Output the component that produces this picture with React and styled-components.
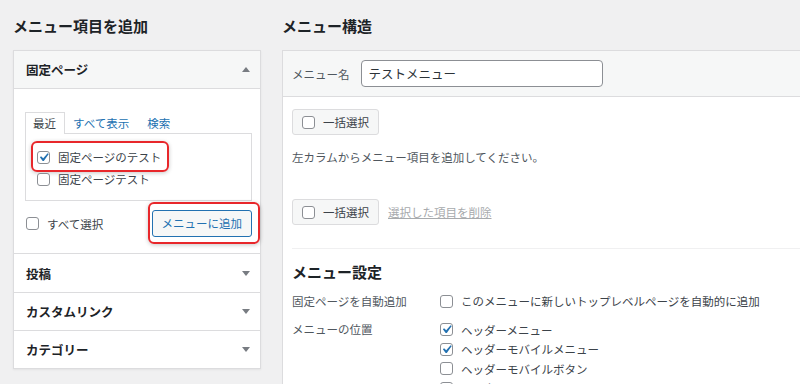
import React from "react";
import styled, { createGlobalStyle } from "styled-components";

const GlobalStyle = createGlobalStyle`
  html, body {
    margin: 0;
    padding: 0;
  }
  body {
    width: 800px;
    height: 384px;
    overflow: hidden;
    background: #f0f0f1;
    font-family: "Noto Sans CJK JP", "Noto Sans", sans-serif;
    font-size: 11.5px;
    color: #3c434a;
  }
`;

const Page = styled.div`
  display: flex;
  gap: 21px;
  padding: 16px 0 0 13px;
  width: 900px;
`;

const Column = styled.div`
  flex: none;
  width: ${(p) => p.$width}px;
`;

const Heading = styled.h2`
  margin: 0 0 14px;
  font-size: 15px;
  line-height: 20px;
  font-weight: 700;
  color: #1d2327;
`;

const Panel = styled.div`
  background: #fff;
  border: 1px solid #dcdcde;
  box-shadow: 0 1px 2px rgba(0, 0, 0, 0.06);
`;

const Section = styled.div`
  & + & {
    border-top: 1px solid #dcdcde;
  }
`;

const SectionHeader = styled.div`
  display: flex;
  align-items: center;
  justify-content: space-between;
  height: ${(p) => p.$height || 37}px;
  padding: 0 10px 0 12px;
  background: ${(p) => (p.$open ? "#f6f7f7" : "#fff")};
  border-bottom: ${(p) => (p.$open ? "1px solid #dcdcde" : "0")};
  font-size: 12.5px;
  font-weight: 700;
  color: #1d2327;
`;

const Arrow = styled.span`
  width: 0;
  height: 0;
  border-left: 4px solid transparent;
  border-right: 4px solid transparent;
  ${(p) =>
    p.$up
      ? "border-bottom: 5px solid #787c82;"
      : "border-top: 5px solid #787c82;"}
`;

const SectionBody = styled.div`
  padding: 23px 8px 16px 11px;
`;

const Tabs = styled.div`
  display: flex;
  align-items: flex-end;
  margin-bottom: -1px;
  position: relative;
  z-index: 1;
`;

const Tab = styled.span`
  line-height: 21px;
  padding: ${(p) => (p.$active ? "0 8px 0 7px" : "0 9px 0 7px")};
  color: ${(p) => (p.$active ? "#3c434a" : "#2271b1")};
  background: ${(p) => (p.$active ? "#fff" : "transparent")};
  border: 1px solid ${(p) => (p.$active ? "#dcdcde" : "transparent")};
  border-bottom: 0;
`;

const TabPanel = styled.div`
  box-sizing: border-box;
  height: 68px;
  border: 1px solid #dcdcde;
  padding: 12px 0 0 11px;
`;

const Item = styled.label`
  position: relative;
  display: inline-flex;
  align-items: center;
  gap: 8px;
  height: 22px;
  color: #3c434a;
`;

const ItemList = styled.div`
  display: flex;
  flex-direction: column;
  align-items: flex-start;
`;

const Highlight = styled.span`
  position: relative;
  display: inline-flex;

  &::after {
    content: "";
    position: absolute;
    top: ${(p) => p.$t}px;
    bottom: ${(p) => p.$b}px;
    left: ${(p) => p.$l}px;
    right: ${(p) => p.$r}px;
    border: 2px solid #e8272b;
    border-radius: 6px;
    box-shadow: 0 1px 4px rgba(0, 0, 0, 0.22);
    pointer-events: none;
  }
`;

const FooterRow = styled.div`
  display: flex;
  align-items: center;
  justify-content: space-between;
  margin-top: 9px;
  padding-left: 1px;
`;

const AddButton = styled.button`
  box-sizing: border-box;
  height: 27px;
  padding: 0 9px;
  font-family: inherit;
  font-size: 11.5px;
  line-height: 25px;
  color: #2271b1;
  background: #f6f7f7;
  border: 1px solid #2271b1;
  border-radius: 3px;
`;

const Box = styled.div`
  background: #fff;
  border: 1px solid #dcdcde;
  height: 400px;
`;

const BoxHeader = styled.div`
  display: flex;
  align-items: center;
  gap: 11px;
  height: 45px;
  padding: 0 9px;
  background: #f6f7f7;
  border-bottom: 1px solid #dcdcde;
`;

const Label = styled.span`
  color: #50575e;
  line-height: 20px;
`;

const NameInput = styled.input`
  box-sizing: border-box;
  width: 242px;
  height: 27px;
  padding: 0 7px;
  font-family: inherit;
  font-size: 12.5px;
  color: #2c3338;
  border: 1px solid #8c8f94;
  border-radius: 4px;
  background: #fff;
`;

const BoxBody = styled.div`
  padding: 12px 9px 0;
`;

const BulkRow = styled.div`
  display: flex;
  align-items: center;
  gap: 9px;
  margin-top: ${(p) => p.$mt || 0}px;
`;

const BulkButton = styled.label`
  display: inline-flex;
  align-items: center;
  gap: 8px;
  height: 24px;
  padding: 0 9px;
  background: #f6f7f7;
  border: 1px solid #dcdcde;
  border-radius: 3px;
  color: #3c434a;
`;

const DeleteLink = styled.span`
  color: #a7aaad;
  text-decoration: underline;
`;

const Note = styled.p`
  margin: 12px 0 0;
  line-height: 20px;
  color: #50575e;
`;

const Divider = styled.hr`
  margin: 23px 0 0;
  border: 0;
  border-top: 1px solid #f0f0f1;
`;

const SubHeading = styled.h3`
  margin: 13px 0 0;
  font-size: 15px;
  line-height: 20px;
  font-weight: 700;
  color: #1d2327;
`;

const SettingsGrid = styled.div`
  display: grid;
  grid-template-columns: 148px 1fr;
  row-gap: 8px;
  margin-top: 9px;
`;

const Options = styled.div`
  display: flex;
  flex-direction: column;
  padding-top: 1px;
`;

const Option = styled.label`
  display: flex;
  align-items: center;
  gap: 8px;
  height: ${(p) => p.$h || 19.5}px;
  color: #3c434a;
`;

const Box13 = styled.span`
  position: relative;
  flex: none;
  box-sizing: border-box;
  width: 13px;
  height: 13px;
  border: 1px solid #8c8f94;
  border-radius: 3px;
  background: #fff;

  svg {
    position: absolute;
    left: -3px;
    top: -3px;
  }
`;

const Check = ({ checked }) => (
  <Box13>
    {checked && (
      <svg width="17" height="17" viewBox="0 0 20 20">
        <path
          fill="#2271b1"
          d="M14.83 4.89l1.34.94-5.81 8.38H9.02L5.78 9.67l1.34-1.25 2.57 2.4z"
        />
      </svg>
    )}
  </Box13>
);

const sections = [
  { title: "投稿", height: 38 },
  { title: "カスタムリンク" },
  { title: "カテゴリー" },
];

const locations = [
  { name: "ヘッダーメニュー", checked: true },
  { name: "ヘッダーモバイルメニュー", checked: true },
  { name: "ヘッダーモバイルボタン", checked: false },
  { name: "フッターメニュー", checked: false },
];

export default function App() {
  return (
    <>
      <GlobalStyle />
      <Page>
        <Column $width={248}>
          <Heading>メニュー項目を追加</Heading>
          <Panel>
            <Section>
              <SectionHeader $open>
                固定ページ
                <Arrow $up />
              </SectionHeader>
              <SectionBody>
                <Tabs>
                  <Tab $active>最近</Tab>
                  <Tab>すべて表示</Tab>
                  <Tab>検索</Tab>
                </Tabs>
                <TabPanel>
                  <ItemList>
                    <Highlight $t={-5} $b={-4} $l={-6} $r={-8}>
                      <Item>
                        <Check checked />
                        固定ページのテスト
                      </Item>
                    </Highlight>
                    <Item>
                      <Check />
                      固定ページテスト
                    </Item>
                  </ItemList>
                </TabPanel>
                <FooterRow>
                  <Item>
                    <Check />
                    すべて選択
                  </Item>
                  <Highlight $t={-8} $b={-7} $l={-4} $r={-8}>
                    <AddButton>メニューに追加</AddButton>
                  </Highlight>
                </FooterRow>
              </SectionBody>
            </Section>
            {sections.map((s) => (
              <Section key={s.title}>
                <SectionHeader $height={s.height}>
                  {s.title}
                  <Arrow />
                </SectionHeader>
              </Section>
            ))}
          </Panel>
        </Column>

        <Column $width={560}>
          <Heading>メニュー構造</Heading>
          <Box>
            <BoxHeader>
              <Label>メニュー名</Label>
              <NameInput defaultValue="テストメニュー" />
            </BoxHeader>
            <BoxBody>
              <BulkRow>
                <BulkButton>
                  <Check />
                  一括選択
                </BulkButton>
              </BulkRow>
              <Note>左カラムからメニュー項目を追加してください。</Note>
              <BulkRow $mt={32}>
                <BulkButton>
                  <Check />
                  一括選択
                </BulkButton>
                <DeleteLink>選択した項目を削除</DeleteLink>
              </BulkRow>
              <Divider />
              <SubHeading>メニュー設定</SubHeading>
              <SettingsGrid>
                <Label>固定ページを自動追加</Label>
                <Option $h={20}>
                  <Check />
                  このメニューに新しいトップレベルページを自動的に追加
                </Option>
                <Label>メニューの位置</Label>
                <Options>
                  {locations.map((l) => (
                    <Option key={l.name}>
                      <Check checked={l.checked} />
                      {l.name}
                    </Option>
                  ))}
                </Options>
              </SettingsGrid>
            </BoxBody>
          </Box>
        </Column>
      </Page>
    </>
  );
}
